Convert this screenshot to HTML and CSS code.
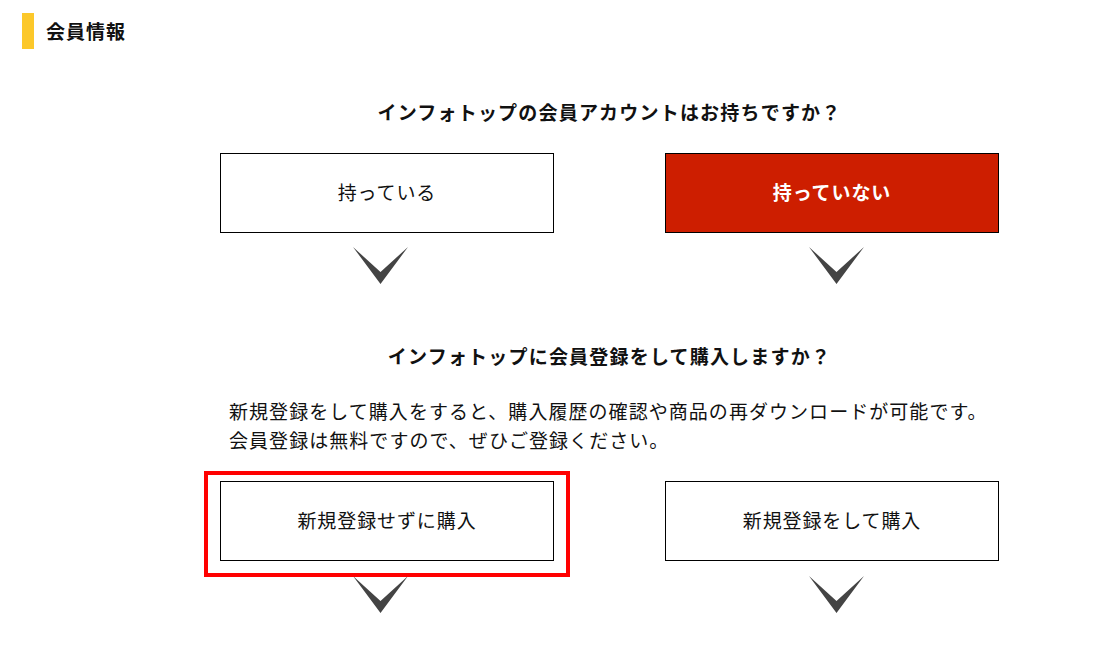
FILE: index.html
```html
<!DOCTYPE html>
<html lang="ja">
<head>
<meta charset="utf-8">
<title>会員情報</title>
<link rel="stylesheet" href="styles.css">
</head>
<body>
<header class="page-head">
  <span class="head-bar"></span>
  <h1 class="head-title">会員情報</h1>
</header>
<main class="flow">
  <section class="step step-first">
    <h2 class="question">インフォトップの会員アカウントはお持ちですか？</h2>
    <div class="choices">
      <div class="choice">持っている</div>
      <div class="choice choice-active">持っていない</div>
    </div>
    <div class="arrows">
      <svg class="arrow" viewBox="0 0 55 37" width="55" height="37"><path d="M0 0 L27.5 25 L55 0 L27.5 37 Z" fill="#444"/></svg>
      <svg class="arrow" viewBox="0 0 55 37" width="55" height="37"><path d="M0 0 L27.5 25 L55 0 L27.5 37 Z" fill="#444"/></svg>
    </div>
  </section>
  <section class="step step-second">
    <h2 class="question">インフォトップに会員登録をして購入しますか？</h2>
    <p class="note">新規登録をして購入をすると、購入履歴の確認や商品の再ダウンロードが可能です。<br>会員登録は無料ですので、ぜひご登録ください。</p>
    <div class="choices">
      <div class="choice choice-marked">新規登録せずに購入<span class="highlight"></span></div>
      <div class="choice">新規登録をして購入</div>
    </div>
    <div class="arrows">
      <svg class="arrow" viewBox="0 0 55 37" width="55" height="37"><path d="M0 0 L27.5 25 L55 0 L27.5 37 Z" fill="#444"/></svg>
      <svg class="arrow" viewBox="0 0 55 37" width="55" height="37"><path d="M0 0 L27.5 25 L55 0 L27.5 37 Z" fill="#444"/></svg>
    </div>
  </section>
</main>
</body>
</html>
```

FILE: styles.css
```css
html, body {
  margin: 0;
  padding: 0;
  background: #fff;
}
body {
  font-family: "Noto Sans CJK JP", "Noto Sans", sans-serif;
  color: #111;
  width: 1102px;
  height: 658px;
  overflow: hidden;
}
.page-head {
  display: flex;
  align-items: center;
  padding: 13px 0 0 22px;
}
.head-bar {
  width: 12px;
  height: 36px;
  background: #fcc82a;
}
.head-title {
  margin: 0 0 0 12px;
  font-size: 19px;
  font-weight: 700;
  line-height: 36px;
  letter-spacing: 1px;
}
.flow {
  width: 779px;
  margin-left: 220px;
}
.step-first {
  padding-top: 48px;
}
.step-second {
  padding-top: 57px;
}
.question {
  margin: 0;
  text-align: center;
  font-size: 19px;
  letter-spacing: 1.2px;
  font-weight: 700;
  line-height: 30px;
}
.note {
  margin: 25px 0 0 9px;
  font-size: 19px;
  letter-spacing: 1.05px;
  line-height: 29px;
}
.choices {
  display: grid;
  grid-template-columns: 334px 334px;
  column-gap: 111px;
  margin-top: 26px;
}
.step-second .choices {
  margin-top: 27px;
}
.choice {
  position: relative;
  box-sizing: border-box;
  height: 80px;
  padding-bottom: 4px;
  border: 1px solid #000;
  display: flex;
  align-items: center;
  justify-content: center;
  font-size: 19px;
  letter-spacing: 0.9px;
  color: #111;
}
.choice-active {
  background: #cd1e00;
  color: #fff;
  font-weight: 700;
}
.highlight {
  position: absolute;
  left: -17px;
  right: -17px;
  top: -11px;
  bottom: -17px;
  border: 4px solid #f00;
  z-index: 2;
}
.arrows {
  display: flex;
  gap: 401px;
  padding-left: 133px;
  margin-top: 14px;
}
.step-second .arrows {
  margin-top: 15px;
}
.arrow {
  display: block;
}
```
